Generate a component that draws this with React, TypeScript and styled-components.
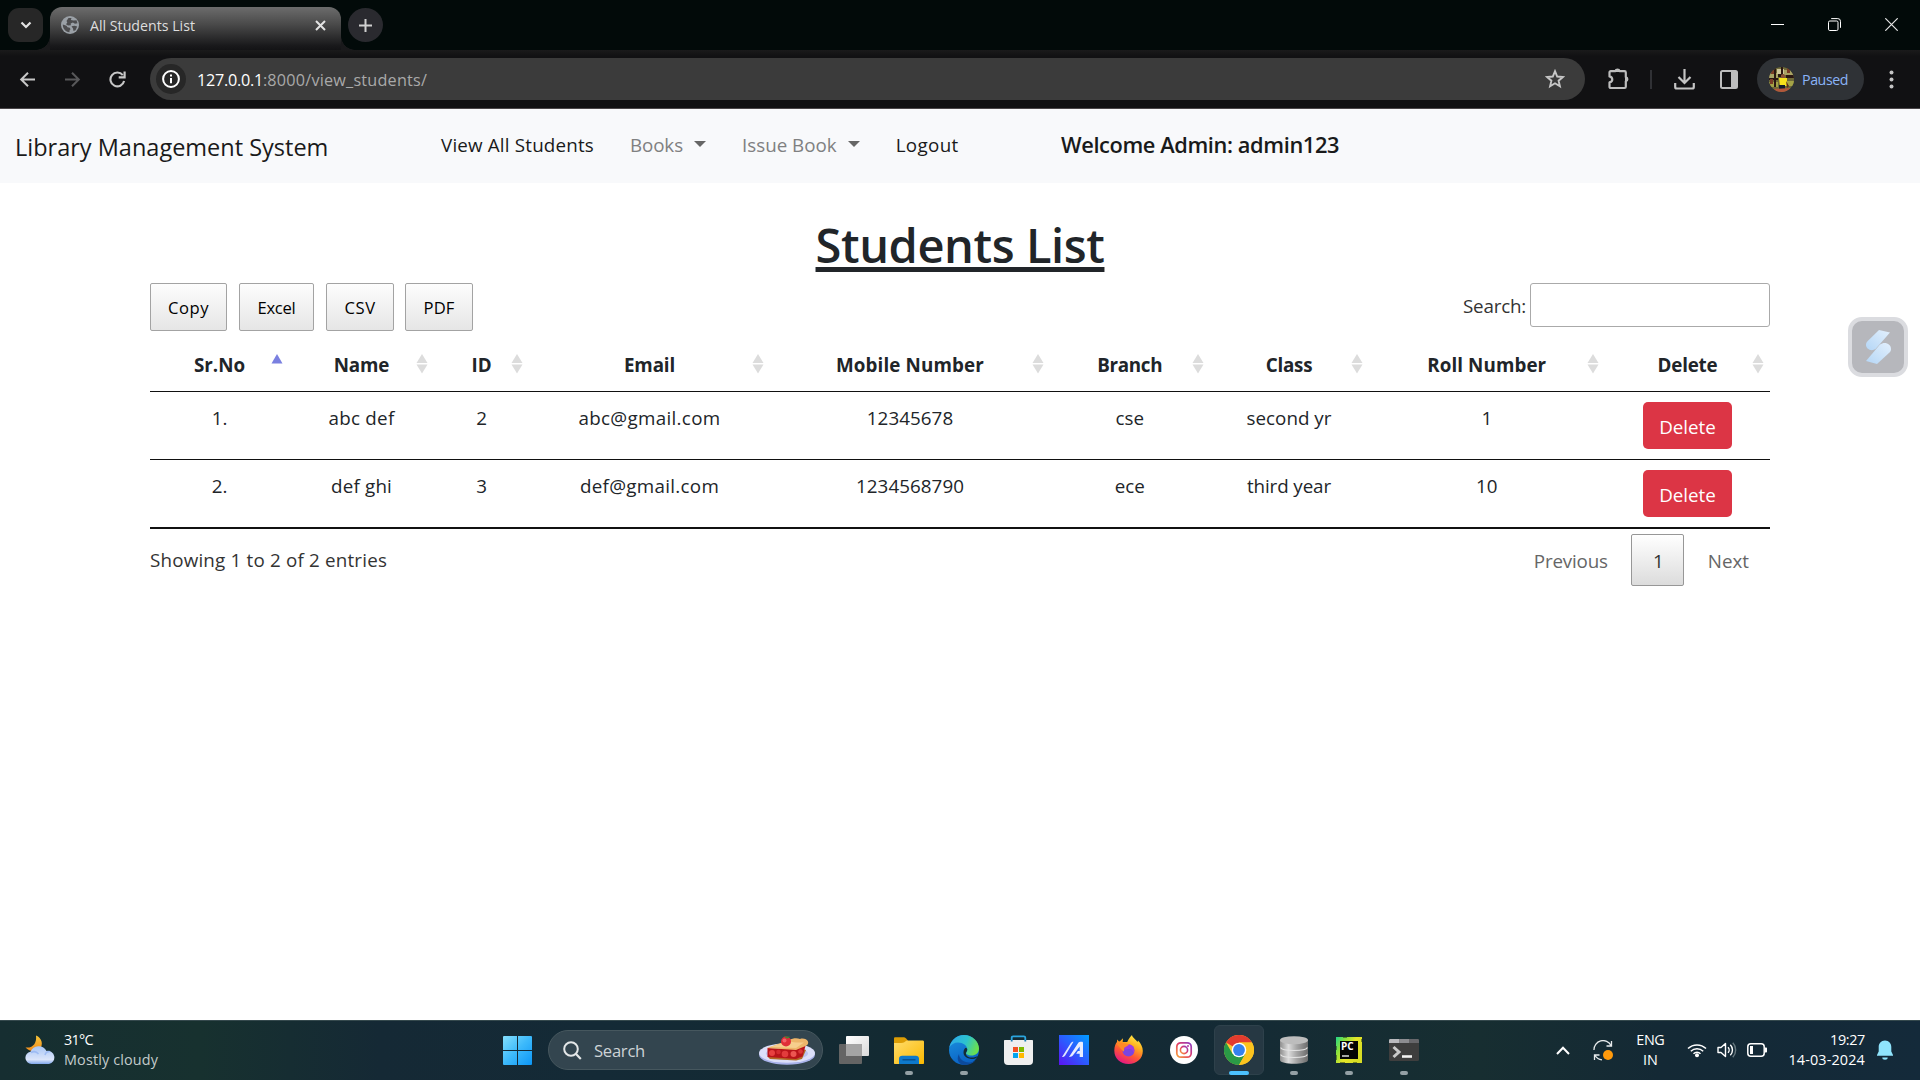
import React from "react";
import styled, { createGlobalStyle, css } from "styled-components";

const GlobalStyle = createGlobalStyle`
  *, *::before, *::after { box-sizing: border-box; }
  html, body { margin: 0; padding: 0; background: #fff; overflow: hidden; }
  body { font-family: "Open Sans", "Noto Sans", sans-serif; color: #212529; }
  svg { display: block; flex: none; }
  button { font-family: inherit; margin: 0; }
`;

const Screen = styled.div`
  width: 1920px;
  height: 1080px;
  display: flex;
  flex-direction: column;
  position: relative;
`;

const Label = styled.span<{ $ls?: number }>`
  letter-spacing: ${(p) => p.$ls ?? 0}px;
  white-space: nowrap;
`;

/* ---------- Browser chrome ---------- */

const TabStrip = styled.div`
  height: 50px;
  flex: none;
  display: flex;
  align-items: flex-start;
  background: #020a09;
  padding: 7px 22px 0 8px;
`;

const TabSearch = styled.div`
  width: 35px;
  height: 34px;
  margin-top: 1px;
  border-radius: 11px;
  background: #272727;
  display: grid;
  place-items: center;
`;

const Tab = styled.div`
  position: relative;
  width: 291px;
  height: 43px;
  margin-left: 7px;
  padding: 0 15px 7px 11px;
  display: flex;
  align-items: center;
  border-radius: 12px 12px 0 0;
  background: linear-gradient(#6c6c6c 0%, #4a4a4a 40%, #19191b 90%, #131315 100%);
  color: #dedede;
  font-size: 14.2px;

  &::before,
  &::after {
    content: "";
    position: absolute;
    bottom: 0;
    width: 14px;
    height: 14px;
  }
  &::before {
    left: -14px;
    background: radial-gradient(circle at 0 0, transparent 13.5px, #19191b 14px);
  }
  &::after {
    right: -14px;
    background: radial-gradient(circle at 100% 0, transparent 13.5px, #19191b 14px);
  }
`;

const TabTitle = styled.div`
  flex: 1;
  margin-left: 11px;
`;

const NewTab = styled.div`
  width: 35px;
  height: 34px;
  margin: 1px 0 0 7px;
  border-radius: 50%;
  background: #2a2a2f;
  display: grid;
  place-items: center;
`;

const WindowControls = styled.div`
  margin-left: auto;
  padding-top: 11px;
  display: flex;
  align-items: center;
  gap: 44px;
`;

const Toolbar = styled.div`
  height: 59px;
  flex: none;
  display: flex;
  align-items: center;
  background: linear-gradient(#1a1a1b, #111113 6px);
  border-bottom: 1px solid #4a4649;
  padding-left: 17px;
`;

const NavButtons = styled.div`
  display: flex;
  gap: 24px;
  width: 133px;
`;

const Omnibox = styled.div`
  width: 1435px;
  height: 42px;
  border-radius: 21px;
  background: #3b3b3b;
  display: flex;
  align-items: center;
  padding: 0 20px 0 6px;
  font-size: 16.2px;
`;

const SiteInfo = styled.div`
  width: 30px;
  height: 30px;
  border-radius: 50%;
  background: #272727;
  display: grid;
  place-items: center;
  margin-right: 11px;
`;

const Host = styled(Label)`
  color: #fff;
  padding-top: 2px;
`;
const Path = styled(Label)`
  color: #a9a9a9;
  flex: 1;
  padding-top: 2px;
`;

const ToolbarIcons = styled.div`
  display: flex;
  align-items: center;
  margin-left: 23px;
`;

const Separator = styled.div`
  width: 2px;
  height: 19px;
  background: #303135;
  margin: 0 22px 0 20px;
`;

const Profile = styled.div`
  width: 107px;
  height: 42px;
  margin-left: 19px;
  margin-right: 25px;
  padding-left: 12px;
  border-radius: 21px;
  background: #2f3236;
  display: flex;
  align-items: center;
  gap: 8px;
  color: #8ab4f8;
  font-size: 14.2px;
`;

const SidePanelSlot = styled.div`
  margin-left: 25px;
`;

/* ---------- Page ---------- */

const Navbar = styled.nav`
  height: 74px;
  flex: none;
  display: flex;
  align-items: center;
  background: #f8f9fb;
  padding-left: 15px;
  font-size: 18.8px;
`;

const Brand = styled.div`
  width: 426px;
  font-size: 23.5px;
  line-height: 38px;
  padding-top: 2px;
  color: #1a1a1a;
`;

const NavItems = styled.div`
  display: flex;
  gap: 36px;
  width: 620px;
  padding-bottom: 2px;
  line-height: 30px;
`;

const NavLink = styled.div<{ $muted?: boolean }>`
  display: flex;
  align-items: center;
  color: ${(p) => (p.$muted ? "#7f8081" : "#191a1a")};
`;

const Caret = styled.i`
  width: 0;
  height: 0;
  margin: 0 0 2px 11px;
  border: 6px solid transparent;
  border-top-color: #666;
  border-bottom: 0;
`;

const Welcome = styled.div`
  font-size: 21.8px;
  font-weight: 600;
  line-height: 30px;
  padding-bottom: 2px;
  color: #191a1a;
`;

const Main = styled.main`
  flex: 1;
  padding: 32px 150px 0;
`;

const Title = styled.h1`
  margin: 0;
  text-align: center;
  font-size: 47px;
  font-weight: 600;
  line-height: 60px;
  letter-spacing: -0.41px;
  text-decoration: underline;
  text-decoration-thickness: 5px;
  text-underline-offset: 4px;
  text-decoration-skip-ink: none;
`;

const Controls = styled.div`
  display: flex;
  justify-content: space-between;
  align-items: flex-start;
  margin-top: 8px;
  height: 48px;
`;

const ExportButtons = styled.div`
  display: flex;
`;

const ExportButton = styled.button<{ $w: number; $gap: number }>`
  width: ${(p) => p.$w}px;
  height: 48px;
  margin-right: ${(p) => p.$gap}px;
  padding: 1px 0 0;
  border: 1px solid #a3a3a3;
  border-radius: 2px;
  background: linear-gradient(#fdfdfd, #e6e6e6);
  color: #000;
  font-size: 16.6px;
`;

const SearchField = styled.label`
  display: flex;
  gap: 4px;
  font-size: 18.8px;
  line-height: 46px;
  color: #333;
`;

const SearchInput = styled.input`
  width: 240px;
  height: 44px;
  border: 1px solid #aaa;
  border-radius: 3px;
  background: transparent;
  padding: 5px;
`;

const Table = styled.table`
  width: 1620px;
  margin-top: 10px;
  table-layout: fixed;
  border-collapse: separate;
  border-spacing: 0;
  border-bottom: 1px solid #111;
  font-size: 18.8px;
`;

const Col = styled.col<{ $w: number }>`
  width: ${(p) => p.$w}px;
`;

const Th = styled.th`
  height: 51px;
  padding: 0;
  border-bottom: 1px solid #111;
  font-weight: 700;
  line-height: 30px;
`;

const HeadCell = styled.div`
  display: flex;
  justify-content: center;
  position: relative;
  padding-bottom: 2px;
`;

const SortMark = styled.svg`
  position: absolute;
  right: 6px;
  top: 3px;
`;

const Td = styled.td`
  height: 68px;
  padding: 10px 0 0;
  border-bottom: 1px solid #111;
  text-align: center;
  vertical-align: top;
  line-height: 33px;
  color: #212529;
`;

const DeleteButton = styled.button`
  display: block;
  width: 89px;
  height: 47px;
  margin: 0 auto;
  padding: 2px 0 0;
  border: 0;
  border-radius: 5px;
  background: #dc3545;
  color: #fff;
  font-size: 18.8px;
`;

const TableFooter = styled.div`
  display: flex;
  align-items: center;
  height: 52px;
  margin-top: 5px;
  font-size: 18.8px;
  color: #333;
`;

const Pager = styled.div`
  margin-left: auto;
  margin-right: 21px;
  display: flex;
  align-items: center;
  gap: 23.5px;
  color: #666;
`;

const PagerLink = styled(Label)`
  padding-top: 2px;
`;

const PageNumber = styled.div`
  width: 53px;
  height: 52px;
  padding: 2px 0 0 1px;
  border: 1px solid #979797;
  border-radius: 2px;
  background: linear-gradient(#fff, #dcdcdc);
  color: #333;
  display: grid;
  place-items: center;
`;

const SideWidget = styled.div`
  position: absolute;
  left: 1848px;
  top: 317px;
  width: 60px;
  height: 60px;
  border: 4px solid #dbdce0;
  border-radius: 14px;
  background: #b6b7bc;
  display: grid;
  place-items: center;
`;

/* ---------- Taskbar ---------- */

const Taskbar = styled.div`
  height: 60px;
  flex: none;
  display: flex;
  align-items: center;
  border-top: 1px solid #35494d;
  padding-bottom: 1px;
  background: linear-gradient(90deg, #162e31 0, #17312f 200px, #152935 380px, #142a36 600px, #132a32 900px, #142a35 1200px, #172e31 1480px, #142935 1660px, #142a3a 1920px);
  color: #fff;
  font-size: 14.4px;
`;

const Weather = styled.div`
  display: flex;
  align-items: center;
  width: 503px;
  padding-left: 25px;
  gap: 9px;
`;

const Stack = styled.div<{ $align?: string }>`
  display: flex;
  flex-direction: column;
  align-items: ${(p) => p.$align ?? "flex-start"};
  line-height: 20px;
`;

const Dim = styled(Label)`
  color: #c3cbcb;
`;

const TaskSearch = styled.div`
  width: 275px;
  height: 40px;
  margin: 0 3px 0 16px;
  padding: 0 7px 0 14px;
  border-radius: 20px;
  border: 1px solid #46575e;
  background: #33454f;
  display: flex;
  align-items: center;
  font-size: 16.6px;
  color: #cdd3d6;
`;

const TaskSearchText = styled.div`
  flex: 1;
  margin-left: 12px;
`;

const Slot = styled.div<{ $active?: boolean; $running?: boolean }>`
  position: relative;
  width: 50px;
  height: 50px;
  margin: 0 2.5px;
  border-radius: 6px;
  display: grid;
  place-items: center;
  ${(p) =>
    p.$active &&
    css`
      background: #263843;
      border: 1px solid #2e414b;
    `}
  ${(p) =>
    (p.$active || p.$running) &&
    css`
      &::after {
        content: "";
        position: absolute;
        bottom: ${p.$active ? -1 : 0}px;
        left: 50%;
        width: ${p.$active ? 20 : 8}px;
        height: 4px;
        border-radius: 2px;
        transform: translateX(-50%);
        background: ${p.$active ? "#4cc2ff" : "#94a0a5"};
      }
    `}
`;

const Tray = styled.div`
  margin-left: auto;
  padding-right: 27px;
  display: flex;
  align-items: center;
`;

const TrayItem = styled.div<{ $w: number }>`
  width: ${(p) => p.$w}px;
  display: flex;
`;

/* ---------- Icons ---------- */

const Svg = ({ w, h, vb, children }: { w: number; h: number; vb?: string; children: React.ReactNode }) => (
  <svg width={w} height={h} viewBox={vb ?? `0 0 ${w} ${h}`} fill="none">
    {children}
  </svg>
);

const Sort = ({ active }: { active?: boolean }) => (
  <SortMark width="12" height="22" viewBox="0 0 12 22">
    {active ? (
      <path d="M6 1 11.5 10.5H.5Z" fill="#7a80e0" />
    ) : (
      <g fill="#dcdcdc">
        <path d="M6 1 11.5 10H.5Z" />
        <path d="M.5 11.5h11L6 20.5Z" />
      </g>
    )}
  </SortMark>
);

const Globe = () => (
  <Svg w={18} h={18}>
    <circle cx="9" cy="9" r="9" fill="#9aa0a6" />
    <path d="M1.800 8.500 5.500 9.800l1 1.500 2.300.4.700 1.500-1 1.300v1.700C4.500 15.800 1.700 12.700 1.800 8.500ZM7.500 2l3 .1-.7 1.800 2.700.6 3-.2 1 3-2.600.4-2-1.200-2.200 1 .2 1.800-2.900.2-2-1.300 1.300-1.700-.8-1.500Z" fill="#4c4c4e" />
    <path d="M10.500 10.300l3-.6 2.700.9-1.700 3.600-2 .9-.5-2.600Z" fill="#4c4c4e" />
  </Svg>
);

const Puzzle = () => (
  <Svg w={22} h={22} vb="0 0 22 22">
    <path
      d="M1.500 4.500c0-.8.500-1.300 1.300-1.300h4.600a2.200 2.200 0 0 1 4.200 0h4.900c.8 0 1.300.5 1.300 1.300v4.600a2.200 2.200 0 0 1 0 4.200v5.400c0 .8-.5 1.300-1.300 1.300H2.800c-.8 0-1.300-.5-1.300-1.300v-4.300c3.700-1 3.700-5 0-6Z"
      stroke="#bdbdbd"
      strokeWidth="2.200"
      strokeLinejoin="round"
    />
    <path d="M8 3.500a2 2 0 0 1 3.500 0ZM17.500 9.500a2 2 0 0 1 0 3.500Z" fill="#bdbdbd" stroke="#bdbdbd" />
  </Svg>
);

const Avatar = () => (
  <Svg w={25} h={25}>
    <defs>
      <clipPath id="avatar"><circle cx="12.500" cy="12.500" r="12.500" /></clipPath>
    </defs>
    <g clipPath="url(#avatar)">
      <rect width="25" height="25" fill="#6f6a38" />
      <path d="M0 6h9v5H0zM15 3h9v5h-9z" fill="#a9a264" />
      <path d="M8 2h7v5H8z" fill="#cfc59a" />
      <path d="M0 15h9v5H0zM18 14h7v5h-7z" fill="#a4a347" />
      <path d="M5 0h2v20H5zM12 0h2v8h-2zM0 11h9v2H0zM17 8h8v3h-8zM9 7h3v3H9z" fill="#2b1712" />
      <path d="M2 2h3v5H2zM18 1h3v5h-3zM1 12h3v5H1z" fill="#7a3b26" />
      <rect x="12" y="7" width="4" height="5" rx="2" fill="#8b5238" />
      <path d="M10 11h8v8h-7z" fill="#f7e21c" />
      <path d="M10 18h6v4h-6z" fill="#141c2c" />
      <path d="M3 22l18-1v4H3z" fill="#b2573b" />
      <path d="M17 14l3 5-2 2z" fill="#5e2c1b" />
    </g>
  </Svg>
);

const WeatherIcon = () => (
  <Svg w={30} h={30}>
    <defs>
      <linearGradient id="moon" x1="0" y1="0" x2="0" y2="1">
        <stop stopColor="#f8c83a" /><stop offset="1" stopColor="#f08a1c" />
      </linearGradient>
      <linearGradient id="cloud" x1="0" y1="0" x2="0" y2="1">
        <stop stopColor="#a9c6f5" /><stop offset=".75" stopColor="#dbe5fa" /><stop offset="1" stopColor="#7ea6ea" />
      </linearGradient>
    </defs>
    <path d="M11 .5c6 2.500 7.500 9 4 13S4.500 17 .5 12.500C8 13.500 12 8 11 .5Z" fill="url(#moon)" />
    <path d="M6.500 29a6.200 6.200 0 0 1-1-12.300A8.800 8.800 0 0 1 21.500 16 6.600 6.600 0 0 1 24 29Z" fill="url(#cloud)" />
    <path d="M6 17.500c3-1.500 6-.5 7.500 1.500M20 20c.5-2 2.500-3.700 5-3.500" stroke="#86aaf0" strokeWidth="1.500" opacity=".6" />
  </Svg>
);

const WindowsLogo = () => (
  <Svg w={29} h={29}>
    <defs>
      <linearGradient id="win" x1="0" y1="0" x2="1" y2="1">
        <stop stopColor="#84dffc" /><stop offset=".5" stopColor="#3cb9fb" /><stop offset="1" stopColor="#0c96f6" />
      </linearGradient>
    </defs>
    <path d="M1 0h13v14H0V1a1 1 0 0 1 1-1Zm14 0h13a1 1 0 0 1 1 1v13H15ZM0 15h14v14H1a1 1 0 0 1-1-1Zm15 0h14v13a1 1 0 0 1-1 1H15Z" fill="url(#win)" />
  </Svg>
);

const Pie = () => (
  <Svg w={56} h={29}>
    <ellipse cx="28" cy="18.500" rx="28" ry="10.300" fill="#a9b2ea" />
    <ellipse cx="28" cy="17" rx="28" ry="9.800" fill="#dcdff9" />
    <ellipse cx="28" cy="17.500" rx="21" ry="6.500" fill="#bcc3ef" />
    <path d="M8.500 20.500 11 23l26 1.500 6-1.500 4-9-3-1-4 9Z" fill="#b36a26" />
    <path d="M8.500 12 36 13l11-5-3.500 12.500-6.500 2.500L8.500 21Z" fill="#b81419" />
    <circle cx="13" cy="17" r="3" fill="#e8403f" />
    <circle cx="19.500" cy="16" r="2.300" fill="#d22a2e" />
    <circle cx="26" cy="18" r="3.300" fill="#e23c3c" />
    <circle cx="34.500" cy="18" r="3" fill="#ec5651" />
    <circle cx="41.500" cy="15.500" r="2.300" fill="#d93638" />
    <path d="M8 12 30 4c4-2 8-2.500 11-1 3-1 7 0 8 2.500.8 2-.5 4-2.500 4.500L37 14c-9-.8-20-1-29-2Z" fill="#edb56a" />
    <path d="M11 11 30 5c5 2 9 1.500 15 1.500L37 12Z" fill="#f6ce8d" />
    <circle cx="27" cy="5.500" r="5" fill="#e02e38" />
    <circle cx="25.500" cy="4.500" r="2" fill="#f4636a" />
    <path d="M27 2 25 .5l3 .3L31 .5l-2 2Z" fill="#3c8c32" />
  </Svg>
);

const TaskView = () => (
  <Svg w={30} h={28}>
    <defs>
      <linearGradient id="tv" x1="0" y1="0" x2="1" y2="1"><stop stopColor="#fff" /><stop offset="1" stopColor="#dadada" /></linearGradient>
    </defs>
    <rect y="8" width="23" height="20" rx="1" fill="#646464" />
    <rect x="7" y="0" width="23" height="20" rx="1" fill="url(#tv)" />
    <path d="M7 8h16v12H7z" fill="#a4a4a4" />
  </Svg>
);

const Folder = () => (
  <Svg w={30} h={27}>
    <defs>
      <linearGradient id="fold" x1="0" y1="0" x2="1" y2="1"><stop stopColor="#ffdc6c" /><stop offset="1" stopColor="#fbb900" /></linearGradient>
    </defs>
    <path d="M0 1.500C0 .7.500.3 1.300.3h8.500c.8 0 1.400.3 2 .9L14 3.500V8H0Z" fill="#dd9d05" />
    <path d="M0 6c3-.2 6 .2 9-.3 2-.5 2.500-2.200 4.500-2.200h15c1 0 1.500.5 1.500 1.500V26c0 .6-.4 1-1 1H1c-.6 0-1-.4-1-1Z" fill="url(#fold)" />
    <path d="M5 27v-5c0-2 1.200-3.200 3.200-3.200h13.600c2 0 3.200 1.200 3.200 3.200v5Z" fill="#0e79cc" />
    <path d="M8.500 22.800h13" stroke="#084b8a" strokeWidth="1.300" />
  </Svg>
);

const Edge = () => (
  <Svg w={30} h={30}>
    <defs>
      <linearGradient id="e1" x1="0" y1=".2" x2="1" y2=".5"><stop stopColor="#2ea8ea" /><stop offset=".55" stopColor="#2cc3cf" /><stop offset="1" stopColor="#6be04b" /></linearGradient>
      <linearGradient id="e2" x1="0" y1="0" x2=".4" y2="1"><stop stopColor="#1c93e0" /><stop offset="1" stopColor="#0a62c4" /></linearGradient>
    </defs>
    <circle cx="15" cy="15" r="15" fill="url(#e2)" />
    <path d="M10 19c0 5 5 9 11 8.500 3-.3 5-1.500 6-2.500A15 15 0 0 1 15 30C9.500 29.500 7 24 10 19Z" fill="#0c4a9c" />
    <path d="M.3 12.500C2 5 8 0 15 0c8.500 0 15 6.500 15 13.500 0 4.500-3.500 7-7.500 7-4 0-5.800-1.700-5.500-2.700.3-.8 1.300-1.300 1.300-3.300C18.300 10.500 14 7.500 9 7.500c-4 0-7 2-8.700 5Z" fill="url(#e1)" />
    <path d="M17 17.800c-.5 3 2 4.800 5.500 4.800 3 0 5-.6 6.500-1.500-1 1.800-2.500 2.800-5 2.900-5.500 0-9.500-2.500-9.500-6.500 0-2.500 1-4.300 2.500-4.800 2 1 1.300 3 0 5.100Z" fill="#132a34" />
  </Svg>
);

const Store = () => (
  <Svg w={29} h={30}>
    <path d="M7.700 7V2.800c0-1 .5-1.500 1.500-1.500h10.600c1 0 1.500.5 1.500 1.500V7" stroke="#2ba6e0" strokeWidth="1.800" />
    <path d="M0 6c0-.6.400-1 1-1h27c.6 0 1 .4 1 1v20a4 4 0 0 1-4 4H4a4 4 0 0 1-4-4Z" fill="#efefef" />
    <path d="M9 12h5v5H9z" fill="#f25022" /><path d="M15 12h5v5h-5z" fill="#7fba00" />
    <path d="M9 18h5v5H9z" fill="#00a4ef" /><path d="M15 18h5v5h-5z" fill="#ffb900" />
    <path d="M7.700 5V6.500M21.300 5v1.500" stroke="#1a7cb2" strokeWidth="1.800" />
  </Svg>
);

const Asus = () => (
  <Svg w={30} h={30}>
    <defs>
      <linearGradient id="as" x1="1" y1="0" x2="0" y2="1"><stop stopColor="#009dff" /><stop offset=".5" stopColor="#2b5cff" /><stop offset="1" stopColor="#5c12f0" /></linearGradient>
    </defs>
    <path d="M0 0h30v30H0z" fill="url(#as)" />
    <path d="M3 22 11.500 8.500c.7-1.300 1.500-1.800 3-1.800L6.500 20c-.8 1.400-1.800 2-3.500 2Z" fill="#dfe6ff" />
    <path d="M10 22 19.500 7.500c.5-.6 1-.8 1.800-.8h1.500c.8 0 1.200.4 1.200 1.200V22h-3.300v-3.200h-3.500l1.700-2.800h1.800v-4.500L14 20.300c-.8 1.200-2 1.700-4 1.700Z" fill="#e9edff" />
  </Svg>
);

const Firefox = () => (
  <Svg w={29} h={30}>
    <defs>
      <linearGradient id="ff" x1=".8" y1="0" x2=".3" y2="1"><stop stopColor="#fff24a" /><stop offset=".35" stopColor="#ffae1f" /><stop offset=".65" stopColor="#ff5634" /><stop offset="1" stopColor="#e31587" /></linearGradient>
    </defs>
    <path d="M18 0c.3 2.500 3.500 4 5.500 7l.5-1.500c3 3 4.800 6.500 4.800 10.500 0 7.500-6 13-14.300 13S.3 23.500.3 15.500C.3 11 2 8 3 7V4.500l2 2 1-.3 3-3-.3 3.800h4.500C14.500 4 16 2 18 0Z" fill="url(#ff)" />
    <circle cx="14.500" cy="15.500" r="6" fill="#7a45e0" />
    <path d="M10 10.500c3-2 7-1.500 9 1 1.500 2 1.500 4.500.5 6.500-.5-3-2-4.500-5-4l-3.500.8Z" fill="#a03be2" />
    <path d="M3 9c2-1.500 4-1.500 6-.8l6 .8c-1 2.500-3.500 2.500-4.500 3.500-.8 1 .3 3-1 4L7 14Z" fill="#ff8a26" />
  </Svg>
);

const Instagram = () => (
  <Svg w={28} h={28}>
    <defs>
      <linearGradient id="ig" x1="0" y1="1" x2="1" y2="0"><stop stopColor="#f9a53a" /><stop offset=".5" stopColor="#e23a62" /><stop offset="1" stopColor="#8a3ac8" /></linearGradient>
    </defs>
    <circle cx="14" cy="14" r="14" fill="#fff" />
    <rect x="6.800" y="6.800" width="14.400" height="14.400" rx="4" stroke="url(#ig)" strokeWidth="1.700" />
    <circle cx="14" cy="14" r="3.600" stroke="url(#ig)" strokeWidth="1.600" />
    <circle cx="18" cy="10" r="1" fill="#b53aa0" />
  </Svg>
);

const Chrome = () => (
  <Svg w={30} h={30}>
    <circle cx="15" cy="15" r="15" fill="#fcc934" />
    <path d="M15 15 2 7.500A15 15 0 0 1 28 7.500H15Z" fill="#e33b2e" />
    <path d="M2 7.500A15 15 0 0 0 15 30l6.500-11.300L15 15 8.500 18.700Z" fill="#2a9a46" />
    <path d="M21.500 18.700 15 30A15 15 0 0 0 28 7.500H15Z" fill="#fcc31e" />
    <circle cx="15" cy="15" r="7.300" fill="#fff" />
    <circle cx="15" cy="15" r="5.900" fill="#3581ee" />
  </Svg>
);

const Database = () => (
  <Svg w={28} h={28}>
    <defs>
      <linearGradient id="db" x1="0" y1="0" x2="1" y2="0"><stop stopColor="#8e8e8e" /><stop offset=".3" stopColor="#dcdcdc" /><stop offset=".6" stopColor="#a5a5a5" /><stop offset="1" stopColor="#6c6c6c" /></linearGradient>
    </defs>
    <path d="M0 19v5c0 5 28 5 28 0v-5Z" fill="url(#db)" />
    <path d="M0 12v6c0 5 28 5 28 0v-6Z" fill="url(#db)" />
    <path d="M.5 18.500c1.500 4 25.500 4 27 0" stroke="#e4e4e4" strokeWidth="1.200" />
    <path d="M0 4v7c0 5 28 5 28 0V4Z" fill="url(#db)" />
    <path d="M.5 11.500c1.500 4 25.500 4 27 0" stroke="#e4e4e4" strokeWidth="1.200" />
    <ellipse cx="14" cy="4.200" rx="14" ry="4" fill="#bdbdbd" />
  </Svg>
);

const PyCharm = () => (
  <Svg w={26} h={26}>
    <defs>
      <linearGradient id="pc" x1="0" y1="0" x2="1" y2=".6"><stop stopColor="#21d789" /><stop offset=".3" stopColor="#8be03c" /><stop offset=".6" stopColor="#e5e629" /><stop offset="1" stopColor="#d8dd25" /></linearGradient>
    </defs>
    <path d="M0 0h26v26H0z" fill="url(#pc)" />
    <path d="M4 4h18v18H4z" fill="#050505" />
    <text x="5" y="13.300" fontSize="10" fontWeight="700" fontFamily="Open Sans" fill="#fff">PC</text>
    <path d="M6 19h7" stroke="#fff" strokeWidth="1.300" />
    <path d="M0 9v4M0 18v5M26 2v3M7 0h4M4 26h5M17 26h4" stroke="#1b2a10" strokeWidth="1" />
  </Svg>
);

const Terminal = () => (
  <Svg w={30} h={22}>
    <rect width="30" height="22" rx="1.500" fill="#3e3e3e" />
    <path d="M1.500 0h9v4H0V1.500C0 .5.500 0 1.500 0Z" fill="#b9b9bd" />
    <path d="M10.500 0h10v4h-10z" fill="#8c8c90" />
    <path d="M20.500 0h8c1 0 1.500.5 1.500 1.500V4h-9.500z" fill="#66666a" />
    <path d="m4.500 8 5.500 5-5.500 5" stroke="#c9c9c9" strokeWidth="3" />
    <path d="M13 17.500h10" stroke="#f2f2f2" strokeWidth="2.600" />
  </Svg>
);

/* ---------- Data ---------- */

const exportButtons = [
  { label: "Copy", w: 77, gap: 12, ls: 0.5 },
  { label: "Excel", w: 75, gap: 12, ls: -0.25 },
  { label: "CSV", w: 68, gap: 11, ls: 0.6 },
  { label: "PDF", w: 68, gap: 0, ls: 0.1 },
];

const columns = [
  { name: "Sr.No", w: 139, ls: 0 },
  { name: "Name", w: 145, ls: -0.15 },
  { name: "ID", w: 95, ls: 0 },
  { name: "Email", w: 241, ls: -0.15 },
  { name: "Mobile Number", w: 280, ls: 0.14 },
  { name: "Branch", w: 159.5, ls: -0.3 },
  { name: "Class", w: 159, ls: -0.2 },
  { name: "Roll Number", w: 236.5, ls: 0.1 },
  { name: "Delete", w: 165, ls: -0.18 },
];

const rows: [string, number][][] = [
  [["1.", 0], ["abc def", 0.26], ["2", 0], ["abc@gmail.com", 0.32], ["12345678", 0.06], ["cse", 0], ["second yr", 0], ["1", 0]],
  [["2.", 0], ["def ghi", 0.2], ["3", 0], ["def@gmail.com", 0.3], ["1234568790", 0.06], ["ece", 0], ["third year", -0.1], ["10", 0]],
];

const tasks: { icon: React.ReactNode; running?: boolean; active?: boolean }[] = [
  { icon: <TaskView /> },
  { icon: <Folder />, running: true },
  { icon: <Edge />, running: true },
  { icon: <Store /> },
  { icon: <Asus /> },
  { icon: <Firefox /> },
  { icon: <Instagram /> },
  { icon: <Chrome />, active: true },
  { icon: <Database />, running: true },
  { icon: <PyCharm />, running: true },
  { icon: <Terminal />, running: true },
];

export default function App() {
  return (
    <Screen>
      <GlobalStyle />

      <TabStrip>
        <TabSearch>
          <Svg w={12} h={8}><path d="m1.500 1.500 4.500 4.500 4.500-4.500" stroke="#e3e3e3" strokeWidth="2.200" /></Svg>
        </TabSearch>
        <Tab>
          <Globe />
          <TabTitle><Label>All Students List</Label></TabTitle>
          <Svg w={11} h={11}><path d="m1 1 9 9M10 1l-9 9" stroke="#e3e3e3" strokeWidth="2" /></Svg>
        </Tab>
        <NewTab>
          <Svg w={13} h={13}><path d="M6.500 0v13M0 6.500h13" stroke="#d0d0d0" strokeWidth="2" /></Svg>
        </NewTab>
        <WindowControls>
          <Svg w={13} h={13}><path d="M0 6.500h13" stroke="#fff" strokeWidth="1" /></Svg>
          <Svg w={13} h={13}>
            <rect x=".5" y="3" width="9.500" height="9.500" rx="1.300" stroke="#fff" />
            <path d="M3.200.6h6.600A2.700 2.700 0 0 1 12.500 3.300v6.500" stroke="#fff" />
          </Svg>
          <Svg w={13} h={13}><path d="m.3.3 12.400 12.400M12.700.3.300 12.700" stroke="#e6e6e6" strokeWidth="1.200" /></Svg>
        </WindowControls>
      </TabStrip>

      <Toolbar>
        <NavButtons>
          <Svg w={21} h={17}><path d="M18 8.500H4.500M11 1.700 4.200 8.500l6.800 6.800" stroke="#c7c7c7" strokeWidth="2" /></Svg>
          <Svg w={21} h={17}><path d="M3 8.500h13.500M10 1.700l6.800 6.800-6.800 6.800" stroke="#58585a" strokeWidth="2" /></Svg>
          <Svg w={20} h={17}>
            <path d="M17.100 10A6.900 6.900 0 1 1 15.800 4.200" stroke="#c7c7c7" strokeWidth="2.100" />
            <path d="M18.700.5v7h-7v-2.200h4.800V.5Z" fill="#c7c7c7" />
          </Svg>
        </NavButtons>
        <Omnibox>
          <SiteInfo>
            <Svg w={18} h={18}>
              <circle cx="9" cy="9" r="7.900" stroke="#fff" strokeWidth="2" />
              <path d="M9 8v5.300M9 4.600v2" stroke="#fff" strokeWidth="2" />
            </Svg>
          </SiteInfo>
          <Host $ls={-0.27}>127.0.0.1</Host>
          <Path $ls={0.22}>:8000/view_students/</Path>
          <Svg w={20} h={20}>
            <path d="m10 2.200 2.200 5.300 5.700.5-4.300 3.700 1.300 5.600L10 14.300l-4.900 3 1.300-5.600L2.100 8l5.700-.5Z" stroke="#c7c7c7" strokeWidth="1.900" />
          </Svg>
        </Omnibox>
        <ToolbarIcons>
          <Puzzle />
          <Separator />
          <Svg w={21} h={21}>
            <path d="M10.500 0v13M4.500 8l6 6 6-6M1.200 14v4c0 1 .5 1.500 1.500 1.500h15.600c1 0 1.500-.5 1.500-1.500v-4" stroke="#c4c4c4" strokeWidth="2.200" />
          </Svg>
          <SidePanelSlot>
            <Svg w={18} h={19}>
              <rect x="1" y="1" width="16" height="17" rx="1.500" stroke="#bdbdbd" strokeWidth="2" />
              <path d="M11 1h6v17h-6z" fill="#bdbdbd" />
            </Svg>
          </SidePanelSlot>
        </ToolbarIcons>
        <Profile>
          <Avatar />
          <Label $ls={-0.4}>Paused</Label>
        </Profile>
        <Svg w={5} h={19}>
          <g fill="#c4c4c4"><circle cx="2.500" cy="2.500" r="2" /><circle cx="2.500" cy="9.500" r="2" /><circle cx="2.500" cy="16.500" r="2" /></g>
        </Svg>
      </Toolbar>

      <Navbar>
        <Brand><Label>Library Management System</Label></Brand>
        <NavItems>
          <NavLink><Label $ls={0.18}>View All Students</Label></NavLink>
          <NavLink $muted><Label $ls={-0.1}>Books</Label><Caret /></NavLink>
          <NavLink $muted><Label>Issue Book</Label><Caret /></NavLink>
          <NavLink><Label $ls={0.35}>Logout</Label></NavLink>
        </NavItems>
        <Welcome><Label $ls={-0.39}>Welcome Admin: admin123</Label></Welcome>
      </Navbar>

      <Main>
        <Title>Students List</Title>
        <Controls>
          <ExportButtons>
            {exportButtons.map((b) => (
              <ExportButton key={b.label} $w={b.w} $gap={b.gap}>
                <Label $ls={b.ls}>{b.label}</Label>
              </ExportButton>
            ))}
          </ExportButtons>
          <SearchField>
            <Label $ls={-0.2}>Search:</Label>
            <SearchInput type="search" />
          </SearchField>
        </Controls>

        <Table>
          <colgroup>{columns.map((c) => <Col key={c.name} $w={c.w} />)}</colgroup>
          <thead>
            <tr>
              {columns.map((c, i) => (
                <Th key={c.name}>
                  <HeadCell>
                    <Label $ls={c.ls}>{c.name}</Label>
                    <Sort active={i === 0} />
                  </HeadCell>
                </Th>
              ))}
            </tr>
          </thead>
          <tbody>
            {rows.map((r, i) => (
              <tr key={i}>
                {r.map(([text, ls], j) => <Td key={j}><Label $ls={ls}>{text}</Label></Td>)}
                <Td><DeleteButton>Delete</DeleteButton></Td>
              </tr>
            ))}
          </tbody>
        </Table>

        <TableFooter>
          <Label $ls={0.19}>Showing 1 to 2 of 2 entries</Label>
          <Pager>
            <PagerLink $ls={-0.18}>Previous</PagerLink>
            <PageNumber>1</PageNumber>
            <PagerLink>Next</PagerLink>
          </Pager>
        </TableFooter>
      </Main>

      <SideWidget>
        <svg width="26" height="36" viewBox="0 0 26 36">
          <defs>
            <linearGradient id="s1" x1="1" y1="0" x2="0" y2="1"><stop stopColor="#e3f0fd" /><stop offset="1" stopColor="#b4d6f6" /></linearGradient>
          </defs>
          <path d="M14 1 25 3.500 10.500 20C6 23 .5 19.500 1 15.500c.2-1.700.8-2.300 1.500-3.200Z" fill="url(#s1)" />
          <path d="M12 35 1 32 15 15.500c4.500-3.500 11-1 11 4.500 0 1.500-.5 2.500-1.500 3.500Z" fill="url(#s1)" />
        </svg>
      </SideWidget>

      <Taskbar>
        <Weather>
          <WeatherIcon />
          <Stack>
            <Label $ls={-0.7}>31°C</Label>
            <Dim $ls={0.14}>Mostly cloudy</Dim>
          </Stack>
        </Weather>
        <WindowsLogo />
        <TaskSearch>
          <Svg w={19} h={19}>
            <circle cx="8" cy="8" r="6.800" stroke="#e4e7e8" strokeWidth="2" />
            <path d="m12.800 12.800 5 5.200" stroke="#e4e7e8" strokeWidth="2.200" />
          </Svg>
          <TaskSearchText><Label $ls={-0.26}>Search</Label></TaskSearchText>
          <Pie />
        </TaskSearch>
        {tasks.map((t, i) => (
          <Slot key={i} $active={t.active} $running={t.running}>{t.icon}</Slot>
        ))}
        <Tray>
          <TrayItem $w={37}>
            <Svg w={14} h={9}><path d="m1 8 6-6.300L13 8" stroke="#fff" strokeWidth="2" /></Svg>
          </TrayItem>
          <TrayItem $w={43}>
            <Svg w={21} h={21}>
              <path d="M1 10a9 9 0 0 1 17-4.500M18.500 1v5h-5" stroke="#e6eaeb" strokeWidth="1.300" />
              <path d="M1.500 20v-5h5M2 15.500c1.500 2.500 4 4 7 4.300" stroke="#e6eaeb" strokeWidth="1.300" />
              <circle cx="15" cy="15" r="5" fill="#ff9a0c" />
            </Svg>
          </TrayItem>
          <Stack $align="center">
            <Label $ls={-0.4}>ENG</Label>
            <Label>IN</Label>
          </Stack>
          <TrayItem $w={53}>
            <Svg w={53} h={16}>
              <g stroke="#fff" strokeWidth="1.500" transform="translate(23 0)">
                <path d="M1 6.500a13 13 0 0 1 18 0" /><path d="M3.800 9.200a9 9 0 0 1 12.400 0" /><path d="M6.500 11.800a5 5 0 0 1 7 0" />
              </g>
              <circle cx="33" cy="13.300" r="2" fill="#fff" />
            </Svg>
          </TrayItem>
          <TrayItem $w={30}>
            <Svg w={21} h={16}>
              <path d="M1 5.500h3L8.500 1.500v13L4 10.500H1Z" stroke="#fff" strokeWidth="1.400" strokeLinejoin="round" />
              <path d="M11 5.200a4 4 0 0 1 0 5.600M13.300 2.800a7.300 7.300 0 0 1 0 10.400" stroke="#fff" strokeWidth="1.400" />
              <path d="M15.800.8a10.500 10.500 0 0 1 0 14.400" stroke="#66777e" strokeWidth="1.400" />
            </Svg>
          </TrayItem>
          <TrayItem $w={41}>
            <Svg w={20} h={14}>
              <rect x=".8" y=".8" width="16.400" height="12.400" rx="3" stroke="#fff" strokeWidth="1.500" />
              <path d="M3 3h3v8H3zM18 4.500h1c.6 0 1 .4 1 1v3c0 .6-.4 1-1 1h-1Z" fill="#fff" />
            </Svg>
          </TrayItem>
          <Stack $align="flex-end">
            <Label $ls={-0.35}>19:27</Label>
            <Label $ls={0.15}>14-03-2024</Label>
          </Stack>
          <Svg w={28} h={20}>
            <path d="M20 .5c4 0 6.300 3 6.300 6.500v4.500L28 15v.8H12V15l1.700-3.500V7C13.700 3.500 16 .5 20 .5Z" fill="#8fe4fc" />
            <path d="M17.300 17.500h5.400a2.700 2.200 0 0 1-5.400 0Z" fill="#8fe4fc" />
          </Svg>
        </Tray>
      </Taskbar>
    </Screen>
  );
}
